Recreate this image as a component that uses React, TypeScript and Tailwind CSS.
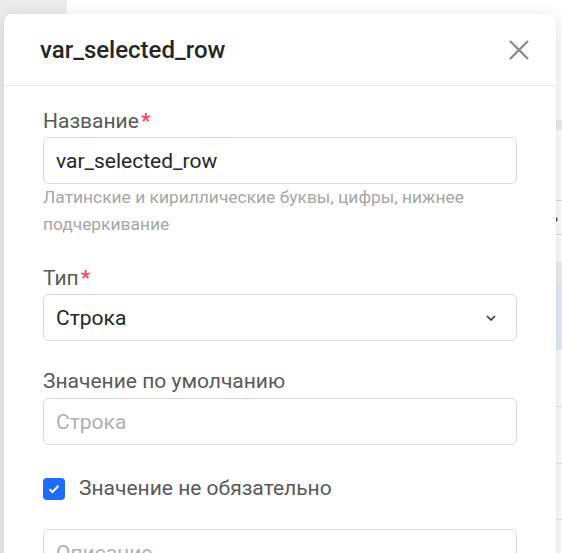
import React from "react";

const font = "font-['Roboto','Liberation_Sans',sans-serif]";

function Label({ text, required }: { text: string; required?: boolean }) {
  return (
    <p className="text-[21px] leading-[24px] text-[#595959]">
      {text}
      {required ? <span className="ml-[2px] font-bold text-[#f5475c]">*</span> : null}
    </p>
  );
}

function Field({ value, placeholder }: { value?: string; placeholder?: string }) {
  return (
    <div className="mt-1 flex h-[47px] items-center rounded-[6px] border border-[#d9d9d9] bg-white px-3 pt-[3px]">
      {value ? (
        <span className="text-[21px] text-[#262626]">{value}</span>
      ) : (
        <span className="text-[21px] text-[#b0b0b0]">{placeholder}</span>
      )}
    </div>
  );
}

function Backdrop() {
  return (
    <div className="flex h-full">
      <div className="w-[67px] shrink-0 bg-[#ececec]" />
      <div className="flex flex-1 flex-col bg-white">
        <div className="h-[120px]" />
        <div className="h-[10px] bg-[#efefef]" />
        <div className="h-[71px] border-b border-[#dcdcdc]" />
        <div className="flex h-[34px] items-center justify-end border-b border-[#dcdcdc] pr-1 text-[14px] text-[#333]">
          Создать
        </div>
        <div className="h-[27px]" />
        <div className="h-[23px] bg-[#f0f0f0]" />
        <div className="h-[65px] bg-[#e6edf8]" />
        <div className="h-[57px] border-b border-[#e3e3e3]" />
        <div className="h-[57px] border-b border-[#e3e3e3]" />
        <div className="h-[56px] border-b border-[#e3e3e3]" />
      </div>
    </div>
  );
}

export default function App() {
  return (
    <div className={`relative h-[553px] w-[562px] overflow-hidden ${font}`}>
      <Backdrop />
      <div className="absolute left-[4px] top-[14px] h-[600px] w-[552px] rounded-[8px] bg-white shadow-[0_4px_18px_rgba(0,0,0,0.14)]">
        <div className="flex h-[72px] items-center justify-between border-b border-[#ebebeb] pl-[36px] pr-[26px]">
          <h2 className="text-[24px] font-medium text-[#262626]">var_selected_row</h2>
          <svg width="22" height="22" viewBox="0 0 22 22" className="text-[#8c8c8c]">
            <path d="M2 2L20 20M20 2L2 20" stroke="currentColor" strokeWidth="2.4" fill="none" />
          </svg>
        </div>
        <div className="px-[39px] pt-[23px]">
          <Label text="Название" required />
          <Field value="var_selected_row" />
          <p className="text-[17.4px] leading-[27px] text-[#a6a6a6]">
            Латинские и кириллические буквы, цифры, нижнее подчеркивание
          </p>

          <div className="mt-[28px]">
            <Label text="Тип" required />
            <div className="mt-1 flex h-[47px] items-center justify-between rounded-[6px] border border-[#d9d9d9] bg-white pl-3 pr-[20px]">
              <span className="pt-[3px] text-[21px] text-[#262626]">Строка</span>
              <svg width="10" height="6" viewBox="0 0 10 6">
                <path d="M1 1L5 5L9 1" stroke="#333" strokeWidth="1.6" fill="none" />
              </svg>
            </div>
          </div>

          <div className="mt-[28px]">
            <Label text="Значение по умолчанию" />
            <div className="mt-[5px] flex h-[47px] items-center rounded-[6px] border border-[#d9d9d9] bg-white px-3 pt-[3px]">
              <span className="text-[21px] text-[#b0b0b0]">Строка</span>
            </div>
          </div>

          <label className="mt-[28px] flex items-center gap-[14px]">
            <span className="flex h-[22px] w-[22px] items-center justify-center rounded-[4px] bg-[#1f6bff]">
              <svg width="12" height="10" viewBox="0 0 12 10">
                <path d="M1.5 5.2L4.5 8L10.5 1.8" stroke="#fff" strokeWidth="2" fill="none" />
              </svg>
            </span>
            <span className="text-[21px] text-[#595959]">Значение не обязательно</span>
          </label>

          <div className="mt-[24px]">
            <Field placeholder="Описание" />
          </div>
        </div>
      </div>
    </div>
  );
}
